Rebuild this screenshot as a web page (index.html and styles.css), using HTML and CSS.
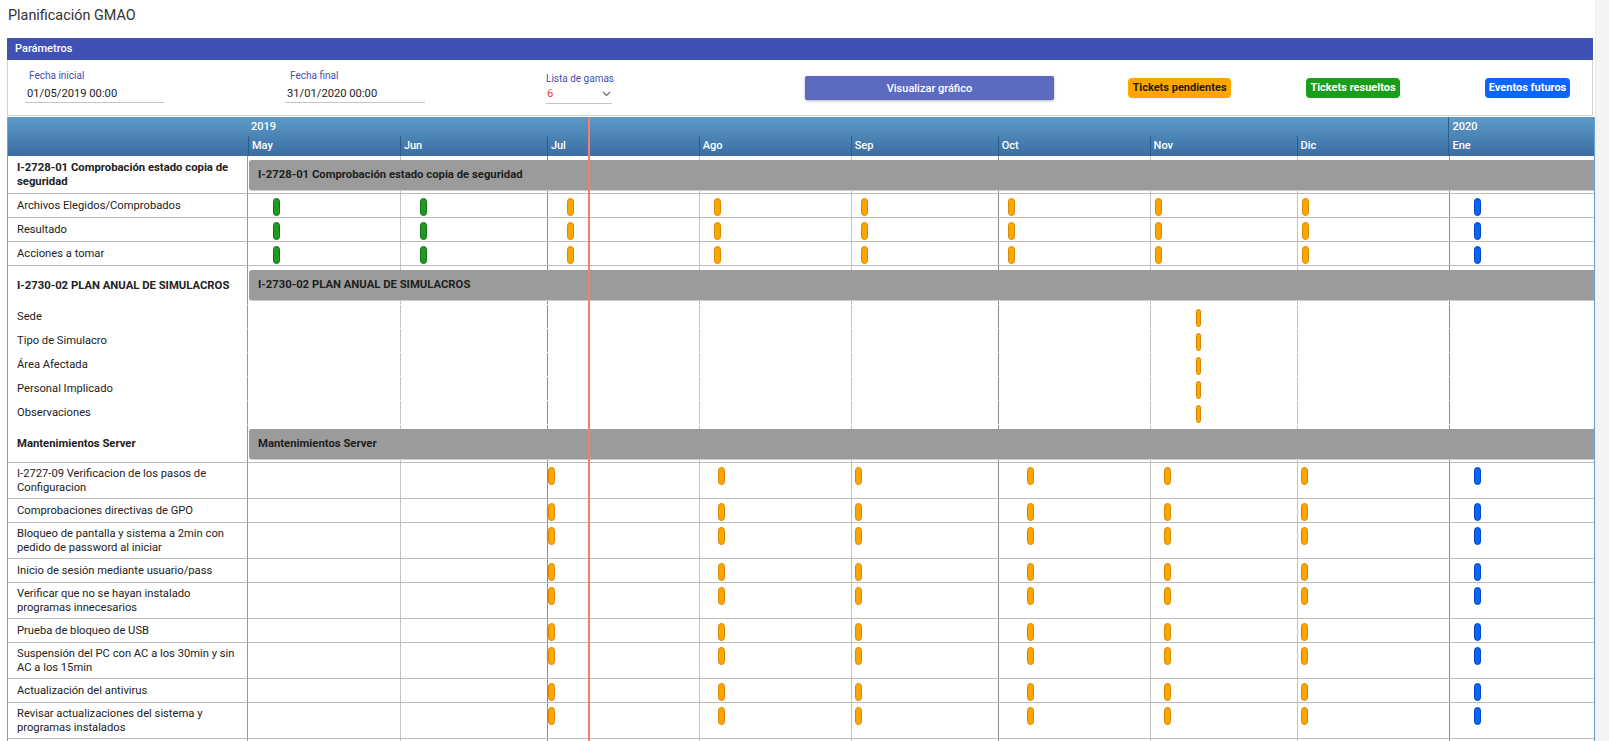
FILE: index.html
```html
<!DOCTYPE html>
<html lang="es">
<head>
<meta charset="utf-8">
<title>Planificación GMAO</title>
<link rel="stylesheet" href="styles.css">
</head>
<body>
<div class="page">
  <div class="main">
    <h1 class="title">Planificación GMAO</h1>

    <section class="card">
      <div class="card-head">Parámetros</div>
      <div class="card-body">
        <div class="field f-start">
          <span class="field-label">Fecha inicial</span>
          <div class="field-input">01/05/2019 00:00</div>
        </div>
        <div class="field f-end">
          <span class="field-label">Fecha final</span>
          <div class="field-input">31/01/2020 00:00</div>
        </div>
        <div class="field f-select">
          <span class="field-label">Lista de gamas</span>
          <div class="field-input select">
            <span class="sel-val">6</span>
            <svg class="chev" width="9" height="6" viewBox="0 0 9 6"><path d="M1 1l3.5 3.5L8 1" fill="none" stroke="#6b6b6b" stroke-width="1.2"/></svg>
          </div>
        </div>
        <button class="btn">Visualizar gráfico</button>
        <span class="badge b-pend">Tickets pendientes</span>
        <span class="badge b-res">Tickets resueltos</span>
        <span class="badge b-fut">Eventos futuros</span>
      </div>
    </section>

    <section class="gantt">
      <div class="gantt-head">
        <div class="head-label"></div>
        <div class="head-time">
          <div class="tl years">
            <div class="year y2019">2019</div>
            <div class="year y2020">2020</div>
          </div>
          <div class="tl months">
            <div class="month">May</div>
            <div class="month">Jun</div>
            <div class="month">Jul</div>
            <div class="month">Ago</div>
            <div class="month">Sep</div>
            <div class="month">Oct</div>
            <div class="month">Nov</div>
            <div class="month">Dic</div>
            <div class="month">Ene</div>
          </div>
        </div>
      </div>

      <div class="gantt-body">
        <!-- Grupo 1 -->
        <div class="row group">
          <div class="lab">I-2728-01 Comprobación estado copia de seguridad</div>
          <div class="cell"><div class="bar">I-2728-01 Comprobación estado copia de seguridad</div></div>
        </div>
        <div class="row task">
          <div class="lab">Archivos Elegidos/Comprobados</div>
          <div class="cell">
            <span class="mk ok" style="left:25px"></span><span class="mk ok" style="left:172px"></span><span class="mk pend" style="left:319px"></span><span class="mk pend" style="left:466px"></span><span class="mk pend" style="left:613px"></span><span class="mk pend" style="left:760px"></span><span class="mk pend" style="left:907px"></span><span class="mk pend" style="left:1054px"></span><span class="mk fut" style="left:1226px"></span>
          </div>
        </div>
        <div class="row task">
          <div class="lab">Resultado</div>
          <div class="cell">
            <span class="mk ok" style="left:25px"></span><span class="mk ok" style="left:172px"></span><span class="mk pend" style="left:319px"></span><span class="mk pend" style="left:466px"></span><span class="mk pend" style="left:613px"></span><span class="mk pend" style="left:760px"></span><span class="mk pend" style="left:907px"></span><span class="mk pend" style="left:1054px"></span><span class="mk fut" style="left:1226px"></span>
          </div>
        </div>
        <div class="row task">
          <div class="lab">Acciones a tomar</div>
          <div class="cell">
            <span class="mk ok" style="left:25px"></span><span class="mk ok" style="left:172px"></span><span class="mk pend" style="left:319px"></span><span class="mk pend" style="left:466px"></span><span class="mk pend" style="left:613px"></span><span class="mk pend" style="left:760px"></span><span class="mk pend" style="left:907px"></span><span class="mk pend" style="left:1054px"></span><span class="mk fut" style="left:1226px"></span>
          </div>
        </div>

        <!-- Grupo 2 -->
        <div class="row group open">
          <div class="lab">I-2730-02 PLAN ANUAL DE SIMULACROS</div>
          <div class="cell"><div class="bar">I-2730-02 PLAN ANUAL DE SIMULACROS</div></div>
        </div>
        <div class="row task plain">
          <div class="lab">Sede</div>
          <div class="cell"><span class="mk pend thin" style="left:948px"></span></div>
        </div>
        <div class="row task plain">
          <div class="lab">Tipo de Simulacro</div>
          <div class="cell"><span class="mk pend thin" style="left:948px"></span></div>
        </div>
        <div class="row task plain">
          <div class="lab">Área Afectada</div>
          <div class="cell"><span class="mk pend thin" style="left:948px"></span></div>
        </div>
        <div class="row task plain">
          <div class="lab">Personal Implicado</div>
          <div class="cell"><span class="mk pend thin" style="left:948px"></span></div>
        </div>
        <div class="row task plain">
          <div class="lab">Observaciones</div>
          <div class="cell"><span class="mk pend thin" style="left:948px"></span></div>
        </div>

        <!-- Grupo 3 -->
        <div class="row group">
          <div class="lab">Mantenimientos Server</div>
          <div class="cell"><div class="bar">Mantenimientos Server</div></div>
        </div>
        <div class="row task">
          <div class="lab">I-2727-09 Verificacion de los pasos de Configuracion</div>
          <div class="cell">
            <span class="mk pend" style="left:300px"></span><span class="mk pend" style="left:470px"></span><span class="mk pend" style="left:607px"></span><span class="mk pend" style="left:779px"></span><span class="mk pend" style="left:916px"></span><span class="mk pend" style="left:1053px"></span><span class="mk fut" style="left:1226px"></span>
          </div>
        </div>
        <div class="row task">
          <div class="lab">Comprobaciones directivas de GPO</div>
          <div class="cell">
            <span class="mk pend" style="left:300px"></span><span class="mk pend" style="left:470px"></span><span class="mk pend" style="left:607px"></span><span class="mk pend" style="left:779px"></span><span class="mk pend" style="left:916px"></span><span class="mk pend" style="left:1053px"></span><span class="mk fut" style="left:1226px"></span>
          </div>
        </div>
        <div class="row task">
          <div class="lab">Bloqueo de pantalla y sistema a 2min con pedido de password al iniciar</div>
          <div class="cell">
            <span class="mk pend" style="left:300px"></span><span class="mk pend" style="left:470px"></span><span class="mk pend" style="left:607px"></span><span class="mk pend" style="left:779px"></span><span class="mk pend" style="left:916px"></span><span class="mk pend" style="left:1053px"></span><span class="mk fut" style="left:1226px"></span>
          </div>
        </div>
        <div class="row task">
          <div class="lab">Inicio de sesión mediante usuario/pass</div>
          <div class="cell">
            <span class="mk pend" style="left:300px"></span><span class="mk pend" style="left:470px"></span><span class="mk pend" style="left:607px"></span><span class="mk pend" style="left:779px"></span><span class="mk pend" style="left:916px"></span><span class="mk pend" style="left:1053px"></span><span class="mk fut" style="left:1226px"></span>
          </div>
        </div>
        <div class="row task">
          <div class="lab">Verificar que no se hayan instalado programas innecesarios</div>
          <div class="cell">
            <span class="mk pend" style="left:300px"></span><span class="mk pend" style="left:470px"></span><span class="mk pend" style="left:607px"></span><span class="mk pend" style="left:779px"></span><span class="mk pend" style="left:916px"></span><span class="mk pend" style="left:1053px"></span><span class="mk fut" style="left:1226px"></span>
          </div>
        </div>
        <div class="row task">
          <div class="lab">Prueba de bloqueo de USB</div>
          <div class="cell">
            <span class="mk pend" style="left:300px"></span><span class="mk pend" style="left:470px"></span><span class="mk pend" style="left:607px"></span><span class="mk pend" style="left:779px"></span><span class="mk pend" style="left:916px"></span><span class="mk pend" style="left:1053px"></span><span class="mk fut" style="left:1226px"></span>
          </div>
        </div>
        <div class="row task">
          <div class="lab">Suspensión del PC con AC a los 30min y sin AC a los 15min</div>
          <div class="cell">
            <span class="mk pend" style="left:300px"></span><span class="mk pend" style="left:470px"></span><span class="mk pend" style="left:607px"></span><span class="mk pend" style="left:779px"></span><span class="mk pend" style="left:916px"></span><span class="mk pend" style="left:1053px"></span><span class="mk fut" style="left:1226px"></span>
          </div>
        </div>
        <div class="row task">
          <div class="lab">Actualización del antivirus</div>
          <div class="cell">
            <span class="mk pend" style="left:300px"></span><span class="mk pend" style="left:470px"></span><span class="mk pend" style="left:607px"></span><span class="mk pend" style="left:779px"></span><span class="mk pend" style="left:916px"></span><span class="mk pend" style="left:1053px"></span><span class="mk fut" style="left:1226px"></span>
          </div>
        </div>
        <div class="row task">
          <div class="lab">Revisar actualizaciones del sistema y programas instalados</div>
          <div class="cell">
            <span class="mk pend" style="left:300px"></span><span class="mk pend" style="left:470px"></span><span class="mk pend" style="left:607px"></span><span class="mk pend" style="left:779px"></span><span class="mk pend" style="left:916px"></span><span class="mk pend" style="left:1053px"></span><span class="mk fut" style="left:1226px"></span>
          </div>
        </div>
        <div class="row filler">
          <div class="lab"></div>
          <div class="cell"></div>
        </div>
      </div>

      <div class="today"></div>
    </section>
  </div>
  <div class="scrollbar"></div>
</div>
</body>
</html>
```

FILE: styles.css
```css
* { box-sizing: border-box; }

html, body {
  margin: 0;
  height: 100%;
}

body {
  font-family: Roboto, "Liberation Sans", Arial, sans-serif;
  font-size: 11px;
  color: #222;
  background: #fff;
  overflow: hidden;
}

.page {
  display: flex;
  height: 741px;
}

.main {
  flex: 1;
  min-width: 0;
  padding-left: 7px;
  display: flex;
  flex-direction: column;
}

.scrollbar {
  width: 14px;
  background: #f4f4f4;
  border-left: 1px solid #ececec;
}

/* Title */
.title {
  margin: 0;
  height: 38px;
  padding: 7px 0 0 1px;
  font-size: 14.4px;
  line-height: 17px;
  font-weight: 400;
  color: #333;
}

/* Parameters card */
.card {
  margin-right: 2px;
  border: 1px solid #d2d2d2;
  border-top: 0;
}

.card-head {
  margin: 0 -1px;
  height: 22px;
  line-height: 21px;
  padding-left: 8px;
  background: #3f51b5;
  color: #fff;
  font-size: 11px;
  font-weight: 500;
}

.card-body {
  height: 55px;
  display: flex;
  align-items: flex-start;
  padding: 10px 0 0 17px;
}

.field {
  display: flex;
  flex-direction: column;
}

.field-label {
  font-size: 10px;
  line-height: 12px;
  color: #3f51b5;
  padding-left: 4px;
  white-space: nowrap;
}

.field-input {
  margin-top: 5px;
  font-size: 11.2px;
  line-height: 14px;
  padding: 0 0 1px 2px;
  border-bottom: 1px solid #c4c4c4;
  color: #222;
}

.f-start { width: 139px; }
.f-end { width: 140px; margin-left: 121px; }
.f-end .field-label { padding-left: 5px; }

.f-select {
  width: 66px;
  margin-left: 121px;
  padding-top: 3px;
}
.f-select .field-label { padding-left: 0; }
.f-select .field-input {
  margin-top: 2px;
  padding: 0 1px 2px 1px;
  display: flex;
  align-items: center;
  justify-content: space-between;
}
.sel-val { color: #e53935; }
.chev { display: block; }

.btn {
  margin: 6px 0 0 193px;
  width: 249px;
  height: 24px;
  border: 0;
  border-radius: 2px;
  background: #5c6bc0;
  color: #fff;
  font-family: inherit;
  font-size: 11px;
  font-weight: 500;
  box-shadow: 0 1px 3px rgba(0, 0, 0, 0.3);
  padding: 0;
}

.badge {
  margin-top: 8px;
  height: 20px;
  line-height: 20px;
  border-radius: 4px;
  text-align: center;
  font-size: 11px;
  font-weight: 700;
  color: #fff;
}
.b-pend { width: 103px; margin-left: 74px; background: #ffa500; color: #1d1d1d; }
.b-res { width: 94px; margin-left: 75px; background: #1a9e1a; }
.b-fut { width: 85px; margin-left: 85px; background: #0a66ff; }

/* Gantt */
.gantt {
  position: relative;
  flex: 1;
  margin-top: 1px;
  border-left: 1px solid #6ea2d2;
  border-right: 1px solid #6ea2d2;
  overflow: hidden;
}

.gantt-head {
  display: grid;
  grid-template-columns: 240px 1fr;
  height: 39px;
  background: linear-gradient(#5d9bc7, #3a6da4);
  color: #fff;
  font-weight: 500;
  font-size: 11px;
}

.head-time { overflow: hidden; }

.tl {
  width: 1352.4px;
  display: grid;
  grid-template-columns: 31fr 30fr 31fr 31fr 30fr 31fr 30fr 31fr 31fr;
}

.years { height: 19px; }
.year { line-height: 19px; padding-left: 3px; }
.y2019 { grid-column: 1 / 9; padding-left: 3px; }
.y2020 { grid-column: 9 / 10; border-left: 1px solid #2d5b8a; }

.months { height: 20px; }
.month {
  line-height: 20px;
  padding-left: 3px;
  border-left: 1px solid #2d5b8a;
}

.gantt-body {
  display: flex;
  flex-direction: column;
}

.row {
  display: grid;
  grid-template-columns: 240px 1fr;
}

.lab {
  display: flex;
  align-items: center;
  min-height: 24px;
  padding: 4px 11px 3px 9px;
  font-size: 11.2px;
  line-height: 14px;
  border-right: 1px solid #6ea2d2;
  border-bottom: 1px solid #bcbcbc;
  color: #222;
}

.cell {
  position: relative;
  border-bottom: 1px solid #bcbcbc;
  background-image:
    linear-gradient(#c4c4c4, #c4c4c4),
    linear-gradient(#8e8e8e, #8e8e8e),
    linear-gradient(#c4c4c4, #c4c4c4),
    linear-gradient(#c4c4c4, #c4c4c4),
    linear-gradient(#8e8e8e, #8e8e8e),
    linear-gradient(#c4c4c4, #c4c4c4),
    linear-gradient(#c4c4c4, #c4c4c4),
    linear-gradient(#8e8e8e, #8e8e8e);
  background-size: 1px 100%;
  background-repeat: no-repeat;
  background-position: 152px 0, 299px 0, 451px 0, 603px 0, 750px 0, 902px 0, 1049px 0, 1201px 0;
}

.group .lab { font-weight: 700; font-size: 11.3px; }
.group .cell { padding: 4px 0 3px; }
.group.open .cell { padding-bottom: 4px; }

.bar {
  height: 30px;
  line-height: 30px;
  margin-left: 1px;
  padding-left: 9px;
  background: #9b9b9b;
  border-radius: 3px 0 0 3px;
  box-shadow: 0 1px 0 #cdcdcd;
  font-size: 11.3px;
  font-weight: 700;
  color: #1e1e1e;
  white-space: nowrap;
}

.group.open .lab,
.group.open .cell,
.plain .lab,
.plain .cell { border-bottom-color: transparent; }

.filler .lab,
.filler .cell { height: 60px; border-bottom: 0; }

.mk {
  position: absolute;
  top: 4px;
  width: 7px;
  height: 18px;
  border-radius: 4px;
  border: 1px solid;
}
.mk.thin { width: 5px; }
.mk.pend { background: #ffa500; border-color: #d68900; }
.mk.ok { background: #1f9c1f; border-color: #136d13; }
.mk.fut { background: #0a64f6; border-color: #0046c2; }

.today {
  position: absolute;
  top: 0;
  bottom: 0;
  left: 580px;
  width: 2px;
  background: #f3806d;
  z-index: 2;
}
```
